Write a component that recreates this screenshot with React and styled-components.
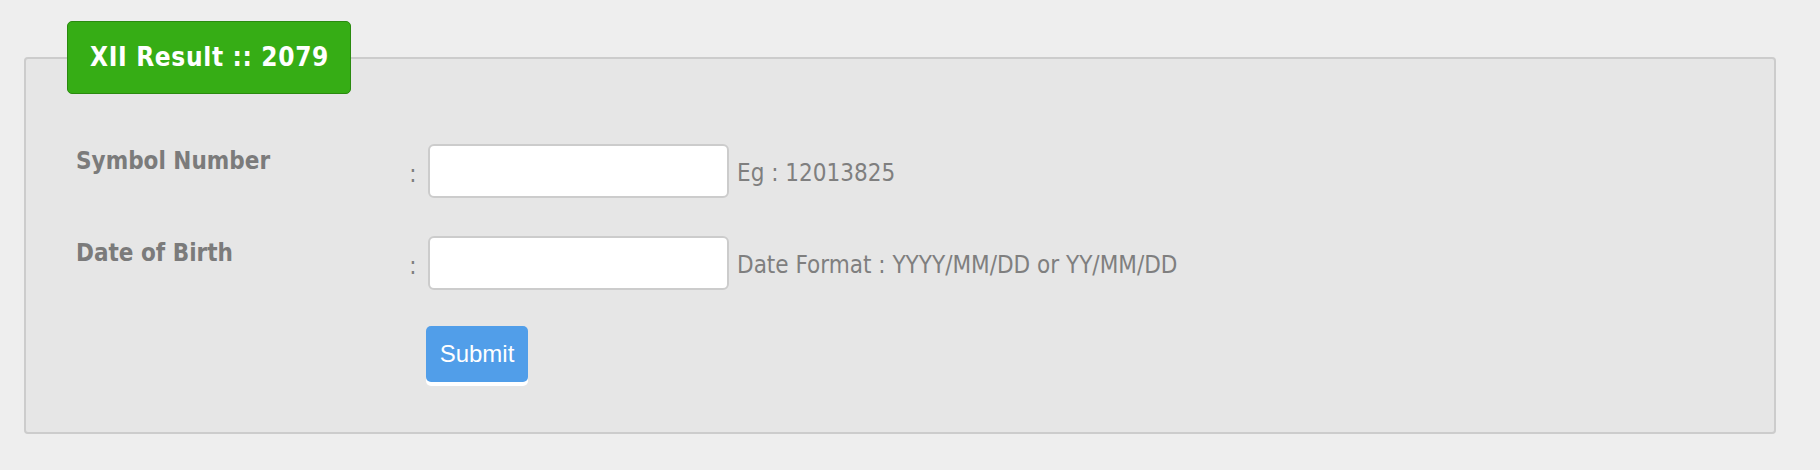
import React from 'react';
import styled, { createGlobalStyle } from 'styled-components';

const GlobalStyle = createGlobalStyle`
  html, body {
    margin: 0;
    padding: 0;
    background: #eeeeee;
  }
  body {
    font-family: "DejaVu Sans Condensed", "DejaVu Sans", Verdana, sans-serif;
    font-stretch: condensed;
  }
`;

const Page = styled.div`
  padding: 21px 44px 36px 24px;
`;

const Box = styled.fieldset`
  margin: 0;
  padding: 0 0 50px 0;
  min-width: 0;
  background: #e6e6e6;
  border: 2px solid #cccccc;
  border-radius: 4px;
`;

const Legend = styled.legend`
  margin-left: 41px;
  padding: 0 21px 0 22px;
  height: 71px;
  line-height: 71px;
  background: #36ad15;
  border: 1px solid #2a8a0f;
  border-radius: 5px;
  color: #ffffff;
  font-size: 26px;
  font-weight: bold;
  letter-spacing: 0.65px;
  box-sizing: content-box;
`;

const Form = styled.form`
  display: flex;
  flex-direction: column;
  gap: 38px;
  padding: 50px 0 0 50px;
`;

const Row = styled.div`
  display: flex;
  align-items: flex-start;
`;

const Label = styled.label`
  width: 330px;
  flex: none;
  padding-top: 3px;
  color: #7b7b7b;
  font-size: 24px;
  font-weight: bold;
`;

const Field = styled.div`
  display: flex;
  align-items: center;
  gap: 8px;
  color: #7f7f7f;
  font-size: 24px;
`;

const Colon = styled.span`
  width: 14px;
  padding-top: 6px;
  text-align: center;
`;

const Input = styled.input`
  width: 301px;
  height: 54px;
  box-sizing: border-box;
  background: #ffffff;
  border: 2px solid #cccccc;
  border-radius: 6px;
  outline: none;
  font-size: 22px;
  padding: 0 10px;
`;

const Hint = styled.span`
  padding-top: 4px;
`;

const Submit = styled.button`
  margin-left: 350px;
  margin-top: -2px;
  align-self: flex-start;
  width: 102px;
  height: 56px;
  border: none;
  border-radius: 5px;
  background: #519ee9;
  box-shadow: 0 4px 0 #ffffff;
  color: #ffffff;
  font-family: "Liberation Sans", Arial, sans-serif;
  font-size: 24px;
  cursor: pointer;
`;

const fields = [
  { label: 'Symbol Number', hint: 'Eg : 12013825' },
  { label: 'Date of Birth', hint: 'Date Format : YYYY/MM/DD or YY/MM/DD' },
];

export default function App() {
  return (
    <>
      <GlobalStyle />
      <Page>
        <Box>
          <Legend>XII Result :: 2079</Legend>
          <Form onSubmit={e => e.preventDefault()}>
            {fields.map(f => (
              <Row key={f.label}>
                <Label>{f.label}</Label>
                <Field>
                  <Colon>:</Colon>
                  <Input type="text" />
                  <Hint>{f.hint}</Hint>
                </Field>
              </Row>
            ))}
            <Submit type="submit">Submit</Submit>
          </Form>
        </Box>
      </Page>
    </>
  );
}
